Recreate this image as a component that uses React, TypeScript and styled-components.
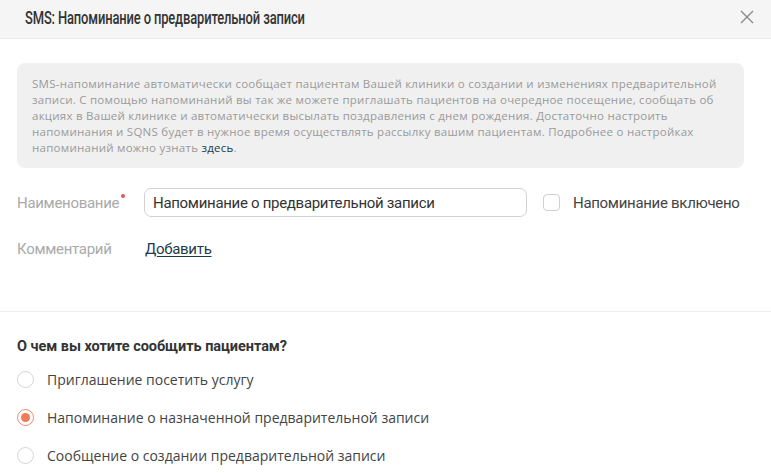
import React from 'react';
import styled, { createGlobalStyle } from 'styled-components';

const GlobalStyle = createGlobalStyle`
  html, body {
    margin: 0;
    padding: 0;
    background: #fff;
  }
  body {
    font-family: Roboto, "Liberation Sans", sans-serif;
    color: #333;
  }
`;

const Modal = styled.div`
  width: 771px;
  height: 473px;
  overflow: hidden;
  background: #fff;
`;

const Header = styled.div`
  height: 39px;
  background: #f5f5f5;
  border-bottom: 1px solid #ebebeb;
  display: flex;
  align-items: center;
  justify-content: space-between;
  padding: 0 16px 4px 25px;
  box-sizing: border-box;
`;

// the original uses a condensed face; squeeze Roboto to the same width
const Title = styled.h2`
  margin: 0;
  font-family: Roboto, sans-serif;
  font-size: 18px;
  font-weight: 500;
  letter-spacing: -0.2px;
  color: #333;
  white-space: nowrap;
  transform: scaleX(0.72);
  transform-origin: left center;
`;

const CloseButton = styled.button`
  border: 0;
  background: none;
  padding: 0;
  width: 16px;
  height: 16px;
  cursor: pointer;
  display: flex;
`;

const Body = styled.div`
  padding: 24px 17px 0 17px;
`;

const InfoBox = styled.div`
  width: 727px;
  box-sizing: border-box;
  background: #f0f0f0;
  border-radius: 8px;
  padding: 13px 10px 12px 15px;
  font-family: "Open Sans", sans-serif;
  font-size: 11.5px;
  letter-spacing: 0.25px;
  line-height: 16px;
  white-space: nowrap;
  color: #9a9a9a;

  a {
    color: #1d3a4c;
    text-decoration: none;
  }
`;

const FormRow = styled.div<{ $top: number }>`
  display: flex;
  align-items: center;
  margin-top: ${(p) => p.$top}px;
`;

const Label = styled.div`
  width: 127px;
  flex-shrink: 0;
  font-family: Roboto, sans-serif;
  font-size: 15px;
  letter-spacing: -0.3px;
  color: #aaa;
  position: relative;
`;

const Required = styled.span`
  position: absolute;
  top: 0;
  left: 104px;
  width: 4px;
  height: 4px;
  border-radius: 50%;
  background: #e8555a;
`;

const TextInput = styled.input`
  width: 383px;
  height: 29px;
  box-sizing: border-box;
  border: 1px solid #d2d2d2;
  border-radius: 7px;
  padding: 0 8px;
  font-family: Roboto, sans-serif;
  font-size: 15px;
  letter-spacing: -0.3px;
  color: #333;
  outline: none;
`;

const CheckLabel = styled.label`
  display: flex;
  align-items: center;
  gap: 13px;
  margin-left: 16px;
  font-family: Roboto, sans-serif;
  font-size: 15px;
  letter-spacing: -0.3px;
  color: #444;
  cursor: pointer;
`;

const CheckBox = styled.span`
  width: 17px;
  height: 17px;
  box-sizing: border-box;
  border: 1px solid #d0d0d0;
  border-radius: 4px;
  background: #fff;
`;

const AddLink = styled.a`
  font-family: Roboto, sans-serif;
  font-size: 15px;
  letter-spacing: -0.3px;
  color: #1d3a4c;
  text-decoration: underline;
  text-underline-offset: 2px;
  margin-left: 1px;
`;

const Divider = styled.hr`
  border: 0;
  border-top: 1px solid #ececec;
  margin: 53px 0 0;
`;

const Section = styled.div`
  padding: 26px 17px 0;
`;

const Question = styled.div`
  font-family: Roboto, sans-serif;
  font-size: 14.5px;
  font-weight: 700;
  letter-spacing: -0.05px;
  color: #333;
  margin-bottom: 15px;
`;

const RadioList = styled.div`
  display: flex;
  flex-direction: column;
  gap: 20px;
`;

const RadioRow = styled.label`
  display: flex;
  align-items: center;
  gap: 13px;
  font-family: "Open Sans", sans-serif;
  font-size: 14px;
  color: #444;
  height: 18px;
  cursor: pointer;
`;

const RadioCircle = styled.span<{ $checked?: boolean }>`
  width: 17px;
  height: 17px;
  box-sizing: border-box;
  border-radius: 50%;
  border: 1px solid ${(p) => (p.$checked ? '#f0886a' : '#d4d4d4')};
  display: flex;
  align-items: center;
  justify-content: center;
  &::after {
    content: '';
    width: 9px;
    height: 9px;
    border-radius: 50%;
    background: ${(p) => (p.$checked ? '#f27a58' : 'transparent')};
  }
`;

const options = [
  'Приглашение посетить услугу',
  'Напоминание о назначенной предварительной записи',
  'Сообщение о создании предварительной записи',
];

export default function App() {
  return (
    <>
      <GlobalStyle />
      <Modal>
        <Header>
          <Title>SMS: Напоминание о предварительной записи</Title>
          <CloseButton aria-label="Закрыть">
            <svg width="16" height="16" viewBox="0 0 16 16">
              <path d="M2 2 L14 14 M14 2 L2 14" stroke="#8a8a8a" strokeWidth="1.4" />
            </svg>
          </CloseButton>
        </Header>
        <Body>
          <InfoBox>
            SMS-напоминание автоматически сообщает пациентам Вашей клиники о создании и изменениях предварительной
            <br />
            записи. С помощью напоминаний вы так же можете приглашать пациентов на очередное посещение, сообщать об
            <br />
            акциях в Вашей клинике и автоматически высылать поздравления с днем рождения. Достаточно настроить
            <br />
            напоминания и SQNS будет в нужное время осуществлять рассылку вашим пациентам. Подробнее о настройках
            <br />
            напоминаний можно узнать <a href="#">здесь</a>.
          </InfoBox>
          <FormRow $top={20}>
            <Label>
              Наименование
              <Required />
            </Label>
            <TextInput defaultValue="Напоминание о предварительной записи" />
            <CheckLabel>
              <CheckBox />
              Напоминание включено
            </CheckLabel>
          </FormRow>
          <FormRow $top={23}>
            <Label>Комментарий</Label>
            <AddLink href="#">Добавить</AddLink>
          </FormRow>
        </Body>
        <Divider />
        <Section>
          <Question>О чем вы хотите сообщить пациентам?</Question>
          <RadioList>
            {options.map((o, i) => (
              <RadioRow key={o}>
                <RadioCircle $checked={i === 1} />
                {o}
              </RadioRow>
            ))}
          </RadioList>
        </Section>
      </Modal>
    </>
  );
}
